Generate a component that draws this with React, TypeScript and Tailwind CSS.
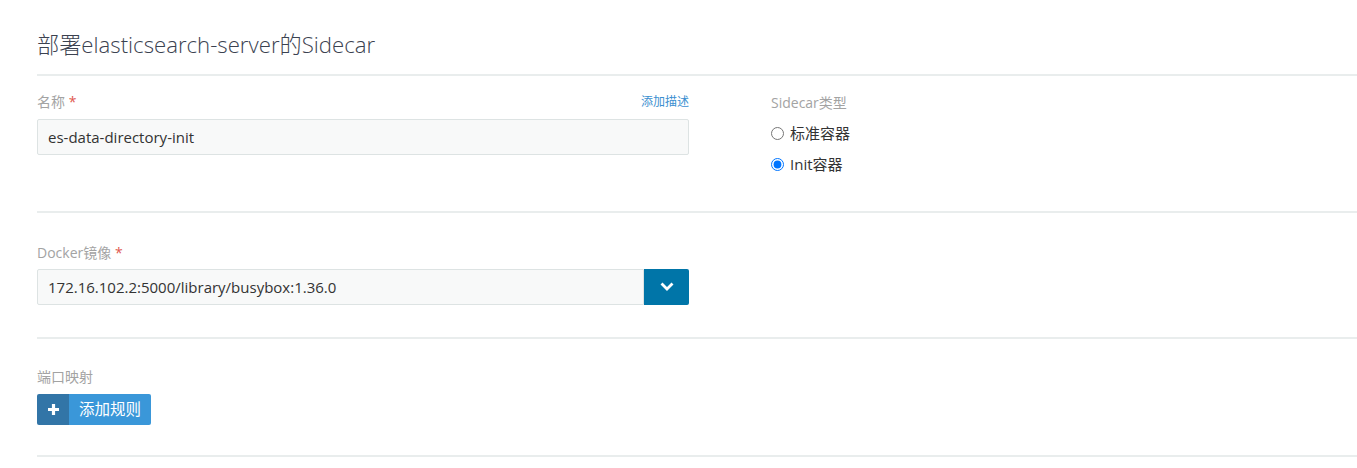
import React from "react";

const font = { fontFamily: '"Open Sans", "Noto Sans CJK SC", sans-serif' };

function Hr() {
  return <div className="h-[2px] bg-[#e9eded]" />;
}

export default function App() {
  return (
    <div className="min-h-[468px] bg-white pl-[37px] text-[#333]" style={font}>
      <h1 className="pt-[30px] pb-[14px] text-[22.2px] leading-[30px] font-light text-[#3b4250]">
        部署elasticsearch-server的Sidecar
      </h1>
      <Hr />
      <div className="flex h-[135px] pt-[16px]">
        <div className="w-[652px]">
          <div className="flex items-center justify-between leading-[20px]">
            <span className="text-[14px] text-[#a3a3a3]">
              名称 <span className="text-[#e0584f]">*</span>
            </span>
            <span className="text-[12px] text-[#3b8fd0]">添加描述</span>
          </div>
          <div className="mt-[7px] flex h-[36px] items-center rounded-[2px] border border-[#dde3e3] bg-[#f8f9f9] px-[10px] text-[15px]">
            es-data-directory-init
          </div>
        </div>
        <div className="ml-[82px] pt-[1px]">
          <div className="text-[14px] leading-[20px] text-[#a3a3a3]">Sidecar类型</div>
          <label className="mt-[10px] flex items-center gap-[6px] text-[15px] leading-[20px]">
            <input type="radio" name="t" className="m-0 h-[13px] w-[13px]" />
            标准容器
          </label>
          <label className="mt-[11px] flex items-center gap-[6px] text-[15px] leading-[20px]">
            <input type="radio" name="t" defaultChecked className="m-0 h-[13px] w-[13px]" />
            Init容器
          </label>
        </div>
      </div>
      <Hr />
      <div className="h-[124px] pt-[30px]">
        <div className="w-[652px]">
          <div className="text-[14px] leading-[20px] text-[#a3a3a3]">
            Docker镜像 <span className="text-[#e0584f]">*</span>
          </div>
          <div className="mt-[6px] flex h-[36px]">
            <div className="flex flex-1 items-center rounded-l-[2px] border border-[#dde3e3] bg-[#f8f9f9] px-[10px] text-[15px]">
              172.16.102.2:5000/library/busybox:1.36.0
            </div>
            <button className="flex w-[45px] items-center justify-center rounded-r-[2px] bg-[#0075a8]">
              <svg width="14" height="14" viewBox="0 0 14 14">
                <path d="M2.5 4.5 L7 9 L11.5 4.5" fill="none" stroke="white" strokeWidth="2.8" strokeLinecap="square" />
              </svg>
            </button>
          </div>
        </div>
      </div>
      <Hr />
      <div className="h-[116px] pt-[28px]">
        <div className="text-[14px] leading-[20px] text-[#a3a3a3]">端口映射</div>
        <button className="mt-[7px] flex h-[31px] overflow-hidden rounded-[2px] text-white">
          <span className="flex w-[32px] items-center justify-center bg-[#3275a7]">
            <svg width="13" height="13" viewBox="0 0 13 13">
              <path d="M6.5 1 V12 M1 6.5 H12" stroke="white" strokeWidth="3.2" />
            </svg>
          </span>
          <span className="flex items-center bg-[#3a97d9] px-[10px] text-[15.5px]">添加规则</span>
        </button>
      </div>
      <Hr />
    </div>
  );
}
